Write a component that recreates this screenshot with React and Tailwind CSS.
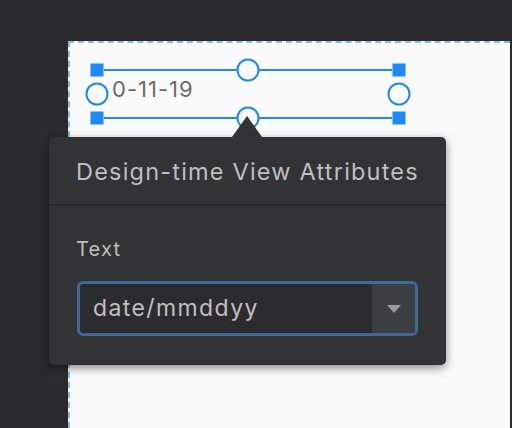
import React from "react";

const BLUE = "#1e88f5";

// Selection handles drawn around the selected TextView
const SelectionHandles = () => {
    const w = 302;
    const h = 48;
    const sq = 13;
    const r = 10.5;
    const squares = [[0, 0], [w, 0], [0, h], [w, h]];
    const circles = [[w / 2, 0], [w / 2, h], [0, h / 2], [w, h / 2]];
    return (
        <svg
            className="absolute left-[-20px] top-[-20px] overflow-visible"
            width={w + 40}
            height={h + 40}
            viewBox={`-20 -20 ${w + 40} ${h + 40}`}
        >
            {[0, h].map((y) => (
                <g key={y} stroke={BLUE} strokeWidth="2">
                    <line x1="7" y1={y} x2={w / 2 - r} y2={y} />
                    <line x1={w / 2 + r} y1={y} x2={w - 7} y2={y} />
                </g>
            ))}
            {squares.map(([x, y]) => (
                <rect key={`${x}-${y}`} x={x - sq / 2} y={y - sq / 2} width={sq} height={sq} fill={BLUE} />
            ))}
            {circles.map(([x, y]) => (
                <circle key={`${x}-${y}`} cx={x} cy={y} r={r} fill="#fafafa" stroke={BLUE} strokeWidth="2" />
            ))}
        </svg>
    );
};

const AttributesPopup = () => (
    <div className="absolute left-[49px] top-[137px] w-[397px] rounded-[5px] bg-[#313335] shadow-[0_3px_10px_rgba(0,0,0,0.45)]">
        {/* pointer up to the selected view */}
        <div className="absolute left-[183px] top-[-21px] h-0 w-0 border-x-[15px] border-b-[21px] border-x-transparent border-b-[#313335]" />

        <div className="pl-[27px] pt-[19px] pb-[16px]">
            <h2 className="whitespace-nowrap text-[23.5px] leading-[32px] tracking-[1.2px] text-[#bfbfbf]">Design-time View Attributes</h2>
        </div>
        <div className="h-[2px] bg-[#27282a]" />

        <div className="px-[28px] pt-[31px] pb-[29px]">
            <div className="ml-[-1px] text-[20px] leading-[24px] tracking-[1.2px] text-[#bfbfbf]">Text</div>
            <div className="mt-[20px] flex h-[55px] rounded-[6px] border-[3px] border-[#3d6a99] bg-[#2b2c2e]">
                <div className="flex flex-1 items-center pl-[13px] text-[23px] tracking-[1.4px] text-[#c0c0c0]">date/mmddyy</div>
                <div className="flex w-[43px] items-center justify-center rounded-r-[3px] bg-[#3c3f41]">
                    <div className="h-0 w-0 border-x-[7.5px] border-t-[8px] border-x-transparent border-t-[#9b9b9b]" />
                </div>
            </div>
        </div>
    </div>
);

export default function App() {
    return (
        <div
            className="relative h-[428px] w-[512px] overflow-hidden bg-[#2b2b2d] pt-[41px] pl-[68px] pr-[2px]"
            style={{ fontFamily: "Inter, 'Noto Sans', sans-serif" }}
        >
            {/* device canvas */}
            <div className="h-full border-l-2 border-t-2 border-dashed border-[#8ab8ec] bg-[#fafafa] pt-[27px] pl-[27px]">
                <div className="relative h-[48px] w-[302px]">
                    <div className="overflow-hidden pl-[15px] pt-[4px] text-[22px] leading-[30px] tracking-[1px] text-[#6b6b6b]">0-11-19</div>
                    <SelectionHandles />
                </div>
            </div>

            <AttributesPopup />
        </div>
    );
}
